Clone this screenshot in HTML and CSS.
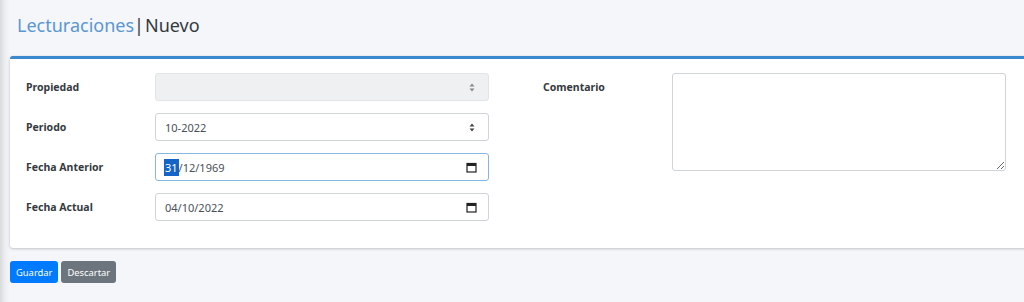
FILE: index.html
```html
<!DOCTYPE html>
<html lang="es">
<head>
    <meta charset="UTF-8">
    <meta name="viewport" content="width=device-width, initial-scale=1.0">
    <title>Lecturaciones | Nuevo</title>
    <link rel="stylesheet" href="styles.css">
</head>
<body>
    <div class="content-header">
        <h1><span class="module">Lecturaciones</span>|<span class="page">Nuevo</span></h1>
    </div>

    <div class="card">
        <div class="card-body">
            <div class="col">
                <div class="form-row">
                    <label>Propiedad</label>
                    <div class="field select disabled">
                        <span class="value"></span>
                        <svg class="arrows" width="6" height="9" viewBox="0 0 6 9"><path d="M3 0.5 L5.5 3.5 H0.5 Z M3 8.5 L5.5 5.5 H0.5 Z"/></svg>
                    </div>
                </div>
                <div class="form-row">
                    <label>Periodo</label>
                    <div class="field select">
                        <span class="value">10-2022</span>
                        <svg class="arrows" width="6" height="9" viewBox="0 0 6 9"><path d="M3 0.5 L5.5 3.5 H0.5 Z M3 8.5 L5.5 5.5 H0.5 Z"/></svg>
                    </div>
                </div>
                <div class="form-row">
                    <label>Fecha Anterior</label>
                    <div class="field date focus">
                        <span class="value"><span class="sel">31</span>/12/1969</span>
                        <svg class="cal" width="11" height="11" viewBox="0 0 11 11"><rect x="1" y="1.5" width="9" height="8.5" fill="none" stroke="#222" stroke-width="1.2"/><rect x="1" y="1.5" width="9" height="2.5" fill="#222"/></svg>
                    </div>
                </div>
                <div class="form-row">
                    <label>Fecha Actual</label>
                    <div class="field date">
                        <span class="value">04/10/2022</span>
                        <svg class="cal" width="11" height="11" viewBox="0 0 11 11"><rect x="1" y="1.5" width="9" height="8.5" fill="none" stroke="#222" stroke-width="1.2"/><rect x="1" y="1.5" width="9" height="2.5" fill="#222"/></svg>
                    </div>
                </div>
            </div>
            <div class="col">
                <div class="form-row">
                    <label>Comentario</label>
                    <textarea class="field comment"></textarea>
                </div>
            </div>
        </div>
    </div>

    <div class="actions">
        <button class="btn btn-primary">Guardar</button>
        <button class="btn btn-secondary">Descartar</button>
    </div>
</body>
</html>
```

FILE: styles.css
```css
html, body {
    overflow: hidden;
}
body {
    margin: 0;
    height: 302px;
    font-family: "Noto Sans", Arial, sans-serif;
    color: #212529;
    background: linear-gradient(to right, #d9dadc 0, #eceef1 5px, #f4f6f9 10px);
}
.content-header {
    padding: 12px 17px 0;
    height: 44px;
    box-sizing: border-box;
}
.content-header h1 {
    margin: 0;
    font-size: 18px;
    font-weight: 400;
    line-height: 26px;
    color: #343a40;
}
.module {
    color: #5b97d3;
}
.page {
    margin-left: 1px;
}
.card {
    margin: 12px -12px 0 10px;
    background: white;
    border-top: 3px solid #3a89cf;
    border-radius: 3px 0 0 3px;
    box-shadow: 0 0 1px rgba(0,0,0,0.125), 0 1px 3px rgba(0,0,0,0.2);
}
.card-body {
    display: flex;
    gap: 54px;
    padding: 14px 16px 27px;
}
.col {
    display: flex;
    flex-direction: column;
    gap: 12px;
}
.form-row {
    display: grid;
    grid-template-columns: 129px 334px;
    align-items: start;
}
label {
    font-size: 10.5px;
    font-weight: 700;
    line-height: 28px;
    color: #343a40;
}
.field {
    box-sizing: border-box;
    height: 28px;
    border: 1px solid #ced4da;
    border-radius: 3px;
    background: white;
    display: flex;
    align-items: center;
    justify-content: space-between;
    padding: 0 11px 0 9px;
    font-size: 11px;
    color: #495057;
}
.field.disabled {
    background: #eef0f2;
    border-color: #e2e5e8;
}
.field.focus {
    border-color: #86b7e0;
}
.arrows {
    fill: #444;
    margin-right: 2px;
}
.disabled .arrows {
    fill: #888;
}
.sel {
    background: #1565c8;
    color: white;
    padding: 1px 1px;
    margin-left: -1px;
}
.comment {
    display: block;
    height: 98px;
    resize: vertical;
    font-family: inherit;
    margin: 0;
}
.actions {
    display: flex;
    gap: 3px;
    padding: 13px 0 0 10px;
}
.btn {
    border: none;
    border-radius: 3px;
    height: 22px;
    padding: 0 6px;
    font-family: inherit;
    font-size: 9.4px;
    color: white;
    cursor: pointer;
}
.btn-primary {
    background-color: #007bff;
}
.btn-secondary {
    background-color: #6c757d;
}
```
